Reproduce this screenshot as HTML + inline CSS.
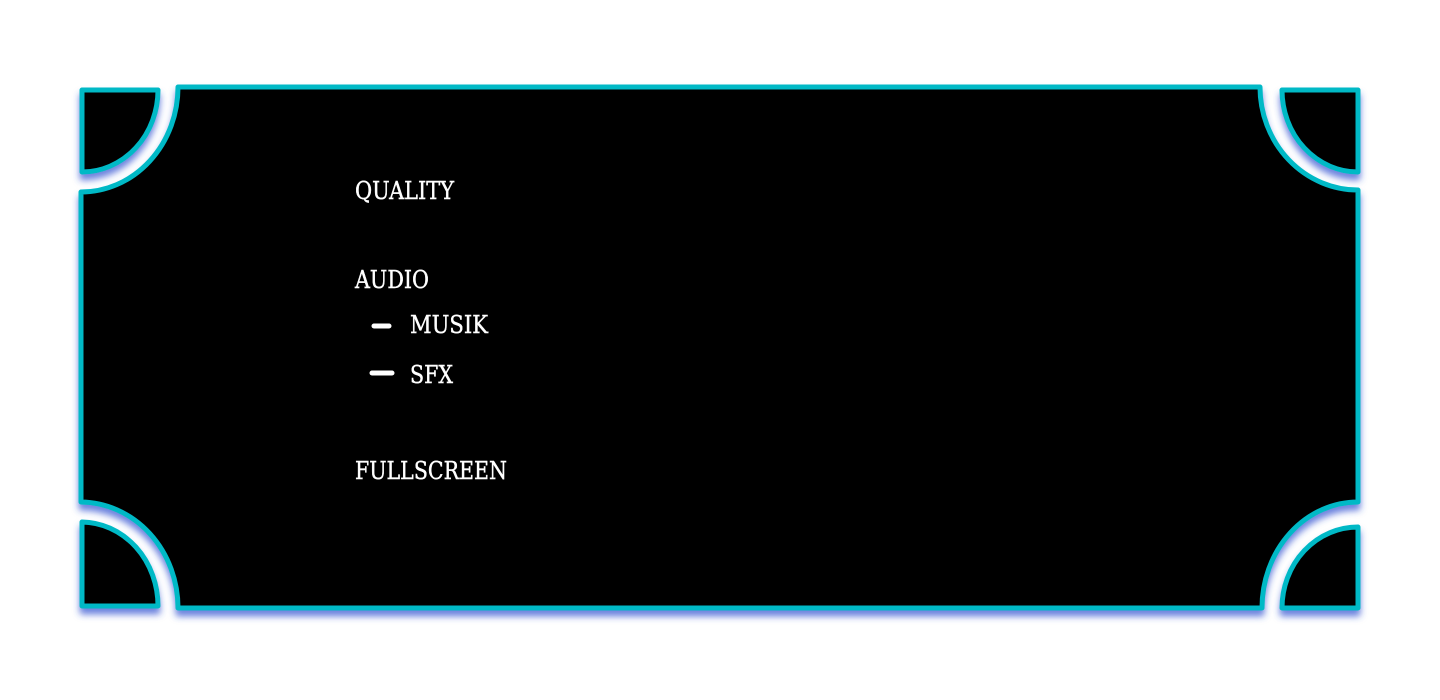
<!DOCTYPE html>
<html><head><style>
html,body{margin:0;padding:0;background:#fff;width:1440px;height:700px;overflow:hidden}
svg{display:block}
text{font-family:"DejaVu Serif","Liberation Serif",serif;font-size:24px;fill:#fff;stroke:#fff;stroke-width:0.4}
</style></head><body>
<svg width="1440" height="700" viewBox="0 0 1440 700">
<defs>
<filter id="sh" x="-5%" y="-5%" width="110%" height="120%">
<feDropShadow dx="0" dy="6" stdDeviation="3.5" flood-color="#2f4fd0" flood-opacity="0.7"/>
</filter>
</defs>
<g fill="#000" stroke="#00b9c6" stroke-width="5" stroke-linejoin="round" filter="url(#sh)">
<path d="M178,87 L1260,87 A98,103 0 0 0 1358,190 L1358,502 A96,106 0 0 0 1262,608 L178,608 A98,106 0 0 0 81,502 L81,192 A97,105 0 0 0 178,87 Z"/>
<path d="M82,90 L158,90 A76,82 0 0 1 82,172 Z"/>
<path d="M82,522 A77,84 0 0 1 158,606 L82,606 Z"/>
<path d="M1282,90 L1358,90 L1358,172 A76,82 0 0 1 1282,90 Z"/>
<path d="M1358,527 L1358,608 L1282,608 A76,81 0 0 1 1358,527 Z"/>
</g>
<text x="355" y="199" textLength="99" lengthAdjust="spacingAndGlyphs">QUALITY</text>
<text x="355" y="288" textLength="74" lengthAdjust="spacingAndGlyphs">AUDIO</text>
<text x="410" y="333" textLength="78" lengthAdjust="spacingAndGlyphs">MUSIK</text>
<text x="410" y="383" textLength="43" lengthAdjust="spacingAndGlyphs">SFX</text>
<text x="355" y="479" textLength="152" lengthAdjust="spacingAndGlyphs">FULLSCREEN</text>
<line x1="374" y1="326" x2="389" y2="326" stroke="#fff" stroke-width="5" stroke-linecap="round"/>
<line x1="372" y1="373" x2="392" y2="373" stroke="#fff" stroke-width="5" stroke-linecap="round"/>
</svg>
</body></html>
